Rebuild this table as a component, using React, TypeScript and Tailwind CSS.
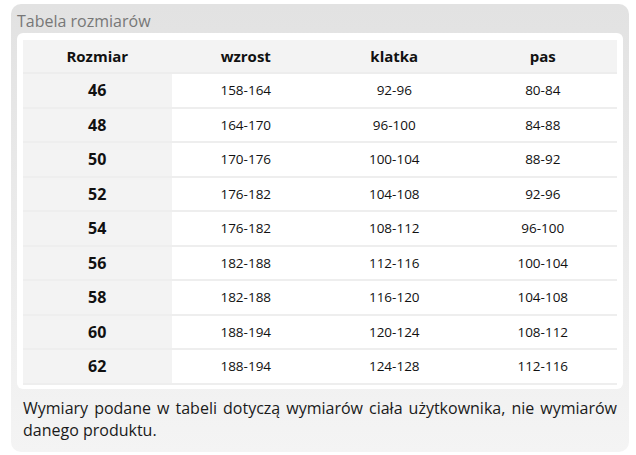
import React from 'react';

const rows = [
  ['46', '158-164', '92-96', '80-84'],
  ['48', '164-170', '96-100', '84-88'],
  ['50', '170-176', '100-104', '88-92'],
  ['52', '176-182', '104-108', '92-96'],
  ['54', '176-182', '108-112', '96-100'],
  ['56', '182-188', '112-116', '100-104'],
  ['58', '182-188', '116-120', '104-108'],
  ['60', '188-194', '120-124', '108-112'],
  ['62', '188-194', '124-128', '112-116'],
];

export default function App() {
  return (
    <div className="w-[636px] h-[455px] bg-white pt-[4px] pl-[11px] font-['Open_Sans',sans-serif]">
      <div className="w-[618px] h-[448px] rounded-[10px] bg-gradient-to-b from-[#e2e2e2] to-[#f4f4f4] px-[6px]">
        <div className="h-[29px] pt-[7px] text-[16px] leading-[21px] text-[#777]">Tabela rozmiarów</div>
        <div className="h-[356px] rounded-[6px] bg-white px-[6px] pt-[7px]">
          <div className="grid grid-cols-4 h-[34px] items-center bg-[#f3f3f3] border-b-2 border-[#ededed] text-[15px] font-bold text-[#111] text-center">
            <div>Rozmiar</div>
            <div>wzrost</div>
            <div>klatka</div>
            <div>pas</div>
          </div>
          {rows.map((r) => (
            <div key={r[0]} className="grid grid-cols-4 h-[34.5px] border-b-2 border-[#eeeeee] text-center text-[13.5px] text-[#111]">
              <div className="flex items-center justify-center bg-[#f3f3f3] text-[16px] font-bold">{r[0]}</div>
              <div className="flex items-center justify-center">{r[1]}</div>
              <div className="flex items-center justify-center">{r[2]}</div>
              <div className="flex items-center justify-center">{r[3]}</div>
            </div>
          ))}
        </div>
        <p className="px-[6px] pt-[8px] text-[16px] leading-[22px] text-[#1a1a1a] text-justify">
          Wymiary podane w tabeli dotyczą wymiarów ciała użytkownika, nie wymiarów danego produktu.
        </p>
      </div>
    </div>
  );
}
